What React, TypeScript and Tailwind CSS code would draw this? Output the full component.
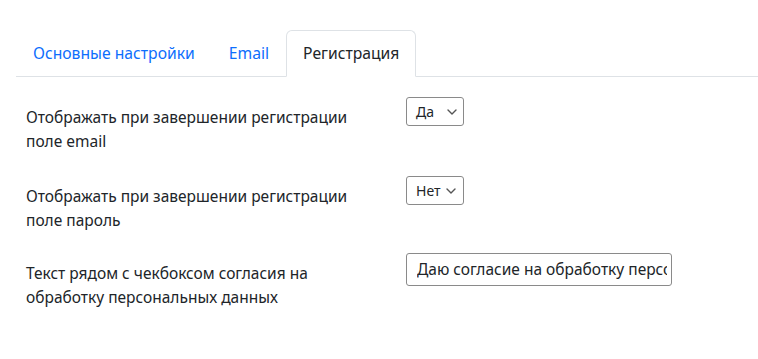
import React from "react";

function Chevron() {
  return (
    <svg width="10" height="6" viewBox="0 0 10 6" fill="none" className="shrink-0">
      <path d="M1 1l4 4 4-4" stroke="#555" strokeWidth="1.4" strokeLinecap="round" strokeLinejoin="round" />
    </svg>
  );
}

function Sel({ value, gap }: { value: string; gap: string }) {
  return (
    <div className={`flex h-[29px] w-[58px] items-center rounded-[3px] border border-[#8a8a8a] bg-white pl-[9px] text-[14px] text-[#212529] ${gap}`}>
      <span>{value}</span>
      <Chevron />
    </div>
  );
}

export default function App() {
  const font = { fontFamily: '"Noto Sans", "Open Sans", sans-serif' };
  return (
    <div className="h-[359px] w-[758px] bg-white text-[#212529]" style={font}>
      <div className="pt-[30px]">
        <div className="ml-[16px] flex border-b border-[#dee2e6] text-[15.7px]">
          <div className="-mb-px flex h-[47px] items-center border border-transparent px-[16px] text-[#0d6efd]">Основные настройки</div>
          <div className="-mb-px flex h-[47px] items-center border border-transparent px-[16px] text-[#0d6efd]">Email</div>
          <div className="-mb-px flex h-[47px] items-center rounded-t-[6px] border border-[#dee2e6] border-b-white bg-white px-[16px] text-[#212529]">Регистрация</div>
        </div>
      </div>
      <div className="flex flex-col gap-[23px] pl-[26px] pt-[20px] text-[15.5px] leading-[24px]">
        <div className="flex">
          <div className="w-[380px] pt-[8px]">Отображать при завершении регистрации<br />поле email</div>
          <Sel value="Да" gap="gap-[13px]" />
        </div>
        <div className="flex">
          <div className="w-[380px] pt-[8px]">Отображать при завершении регистрации<br />поле пароль</div>
          <Sel value="Нет" gap="gap-[5px]" />
        </div>
        <div className="-mt-[2px] flex">
          <div className="w-[380px] pt-[8px]">Текст рядом с чекбоксом согласия на<br />обработку персональных данных</div>
          <div className="h-[33px] w-[266px] overflow-hidden whitespace-nowrap rounded-[3px] border border-[#8a8a8a] pl-[10px] pr-[4px] leading-[31px]">
            <div className="overflow-hidden">Даю согласие на обработку персональных данных</div>
          </div>
        </div>
      </div>
    </div>
  );
}
